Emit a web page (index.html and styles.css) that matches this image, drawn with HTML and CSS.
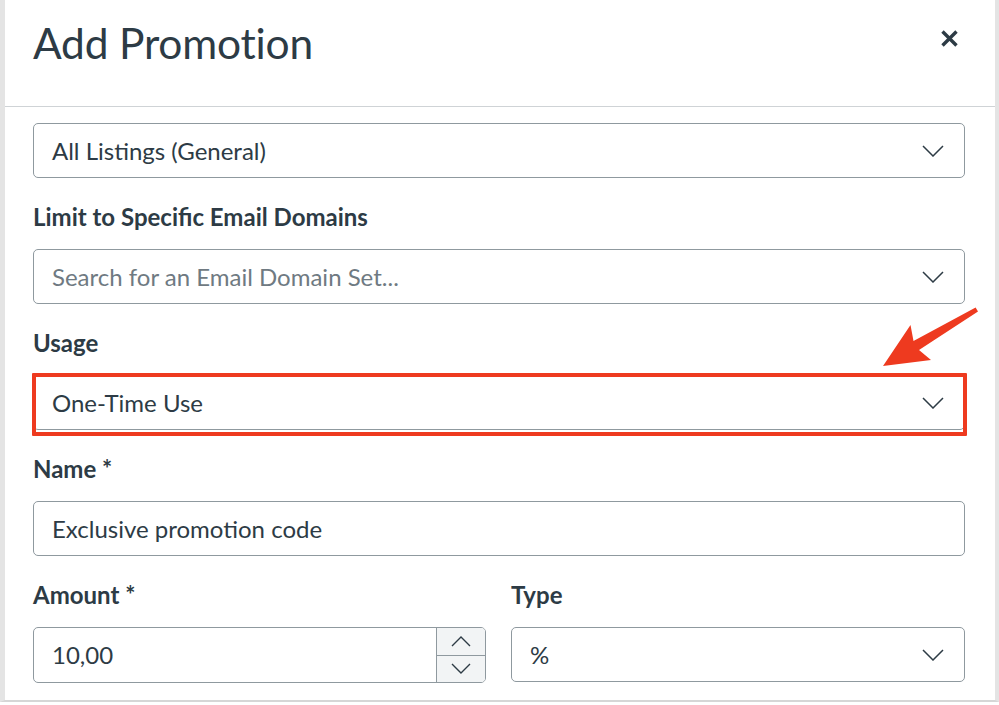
FILE: index.html
```html
<!DOCTYPE html>
<html lang="en">
<head>
<meta charset="utf-8">
<title>Add Promotion</title>
<link rel="stylesheet" href="styles.css">
</head>
<body>
<div class="modal">
  <header class="modal-header">
    <h1 class="modal-title">Add Promotion</h1>
    <button class="close" aria-label="Close">
      <svg width="17" height="17" viewBox="0 0 17 17"><path d="M1.5 1.5 L15.5 15.5 M15.5 1.5 L1.5 15.5" stroke="#2d3b45" stroke-width="3.4" stroke-linecap="butt"/></svg>
    </button>
  </header>
  <div class="modal-body">
    <div class="field first">
      <div class="select">
        <span class="value">All Listings (General)</span>
        <svg class="chev" width="22" height="12" viewBox="0 0 22 12"><path d="M1 1 L11 11 L21 1" fill="none" stroke="#2d3b45" stroke-width="1.5"/></svg>
      </div>
    </div>
    <div class="field">
      <label class="label">Limit to Specific Email Domains</label>
      <div class="select">
        <span class="value placeholder">Search for an Email Domain Set...</span>
        <svg class="chev" width="22" height="12" viewBox="0 0 22 12"><path d="M1 1 L11 11 L21 1" fill="none" stroke="#2d3b45" stroke-width="1.5"/></svg>
      </div>
    </div>
    <div class="field">
      <label class="label">Usage</label>
      <div class="highlight-wrap">
        <div class="select">
          <span class="value">One-Time Use</span>
          <svg class="chev" width="22" height="12" viewBox="0 0 22 12"><path d="M1 1 L11 11 L21 1" fill="none" stroke="#2d3b45" stroke-width="1.5"/></svg>
        </div>
        <div class="highlight"></div>
      </div>
    </div>
    <div class="field">
      <label class="label">Name *</label>
      <div class="select">
        <span class="value">Exclusive promotion code</span>
      </div>
    </div>
    <div class="row">
      <div class="field col">
        <label class="label">Amount *</label>
        <div class="select number">
          <span class="value">10,00</span>
          <div class="spinner">
            <div class="spin-btn">
              <svg width="20" height="11" viewBox="0 0 20 11"><path d="M1 10 L10 1 L19 10" fill="none" stroke="#2d3b45" stroke-width="1.4"/></svg>
            </div>
            <div class="spin-btn">
              <svg width="20" height="11" viewBox="0 0 20 11"><path d="M1 1 L10 10 L19 1" fill="none" stroke="#2d3b45" stroke-width="1.4"/></svg>
            </div>
          </div>
        </div>
      </div>
      <div class="field col">
        <label class="label">Type</label>
        <div class="select">
          <span class="value">%</span>
          <svg class="chev" width="22" height="12" viewBox="0 0 22 12"><path d="M1 1 L11 11 L21 1" fill="none" stroke="#2d3b45" stroke-width="1.5"/></svg>
        </div>
      </div>
    </div>
  </div>
  <svg class="arrow" width="999" height="705" viewBox="0 0 999 705">
    <polygon points="883,366 910.5,325 913.5,341 975.6,307.5 978,311.5 919,350 931,360" fill="#ee3a1f"/>
  </svg>
</div>
</body>
</html>
```

FILE: styles.css
```css
* { box-sizing: border-box; }
html, body { margin: 0; padding: 0; background: #ffffff; }
body {
  font-family: Lato, "Noto Sans", sans-serif;
  color: #2d3b45;
  width: 999px;
  height: 705px;
  overflow: hidden;
}
.modal {
  position: relative;
  width: 999px;
  height: 702px;
  border-left: 5px solid #e4e4e4;
  border-right: 4px solid #e4e4e4;
  border-bottom: 2px solid #d6d6d6;
  background: #fff;
}
.modal-header {
  height: 107px;
  border-bottom: 1px solid #cfd3d6;
  display: flex;
  justify-content: space-between;
  align-items: flex-start;
  padding: 0 37px 0 28px;
}
.modal-title {
  margin: 0;
  font-weight: 400;
  font-size: 42.5px;
  line-height: 1;
  padding-top: 22px;
  letter-spacing: -0.2px;
}
.close {
  margin-top: 30px;
  padding: 0;
  border: 0;
  background: none;
  width: 17px;
  height: 17px;
  display: flex;
}
.modal-body {
  padding: 16px 30px 0 28px;
  display: flex;
  flex-direction: column;
  gap: 24px;
}
.field { display: flex; flex-direction: column; }
.label {
  font-weight: 700;
  font-size: 24px;
  line-height: 30px;
  margin-bottom: 17px;
}
.select {
  height: 55px;
  border: 1px solid #8f999f;
  border-radius: 5px;
  display: flex;
  align-items: center;
  justify-content: space-between;
  padding: 0 20px 0 18px;
  background: #fff;
}
.value { font-size: 24px; line-height: 1; }
.placeholder { color: #6f7a82; }
.chev { display: block; }
.highlight-wrap { position: relative; }
.highlight {
  position: absolute;
  left: -1px;
  right: -2px;
  top: -2px;
  bottom: -6px;
  border: 4px solid #ee3a1f;
  border-radius: 1px;
}
.row {
  display: grid;
  grid-template-columns: 453px 454px;
  column-gap: 25px;
}
.number { padding-right: 0; height: 56px; }
.spinner {
  align-self: stretch;
  width: 49px;
  border-left: 1px solid #8f999f;
  display: flex;
  flex-direction: column;
  background: #f2f4f5;
  border-radius: 0 4px 4px 0;
  overflow: hidden;
}
.spin-btn {
  flex: 1;
  display: flex;
  align-items: center;
  justify-content: center;
}
.spin-btn + .spin-btn { border-top: 1px solid #8f999f; }
.arrow {
  position: absolute;
  left: -5px;
  top: 0;
  pointer-events: none;
}
```
